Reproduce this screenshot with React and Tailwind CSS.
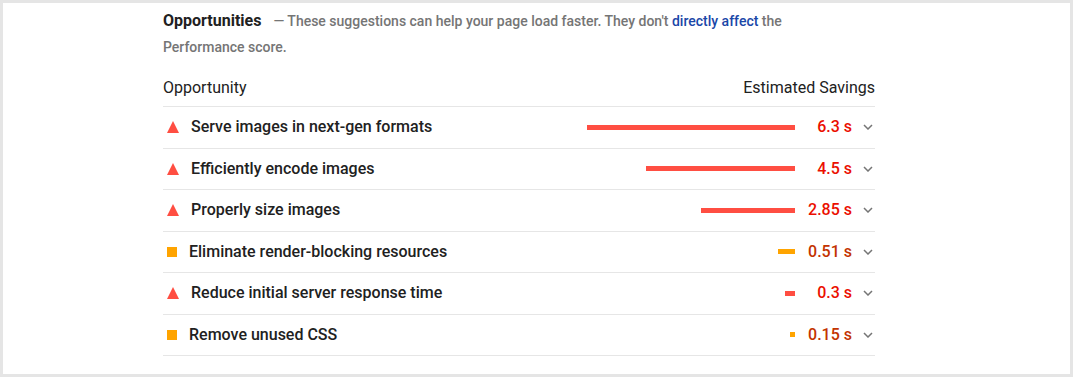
import React from 'react';

const RED = { bar: 'bg-[#ff4e42]', text: 'text-[#eb0f00]' };
const ORANGE = { bar: 'bg-[#ffa400]', text: 'text-[#c33300]' };

const audits = [
    { title: 'Serve images in next-gen formats', savings: 6.3, label: '6.3 s', level: 'fail' },
    { title: 'Efficiently encode images', savings: 4.5, label: '4.5 s', level: 'fail' },
    { title: 'Properly size images', savings: 2.85, label: '2.85 s', level: 'fail' },
    { title: 'Eliminate render-blocking resources', savings: 0.51, label: '0.51 s', level: 'average' },
    { title: 'Reduce initial server response time', savings: 0.3, label: '0.3 s', level: 'fail' },
    { title: 'Remove unused CSS', savings: 0.15, label: '0.15 s', level: 'average' },
];

// Lighthouse-style status icon: red triangle or orange square
const StatusIcon = ({ level }) =>
    level === 'fail' ? (
        <svg width="12" height="12" viewBox="0 0 12 12" className="ml-[4px] mr-[12px] shrink-0">
            <polygon points="6,0 12,12 0,12" fill="#ff4e42" />
        </svg>
    ) : (
        <span className="ml-[4px] mr-[12px] w-[10px] h-[10px] bg-[#ffa400] shrink-0" />
    );

const Chevron = () => (
    <svg width="10" height="6" viewBox="0 0 10 6" className="shrink-0">
        <polyline points="1,1 5,5 9,1" fill="none" stroke="#757575" strokeWidth="1.5" />
    </svg>
);

const AuditRow = ({ audit }) => {
    const c = audit.level === 'fail' ? RED : ORANGE;
    return (
        <div className="flex items-center h-[41.5px] border-b border-[#e6e6e6]">
            <StatusIcon level={audit.level} />
            <span className="text-[16px] text-[#212121] font-medium">{audit.title}</span>
            <div className="flex-1 flex justify-end">
                <div className={`h-[5px] ${c.bar}`} style={{ width: `${Math.round(audit.savings * 33)}px` }} />
            </div>
            <span className={`w-[57px] text-right text-[16px] font-medium ${c.text}`}>{audit.label}</span>
            <span className="w-[23px] flex justify-end pr-[2px]">
                <Chevron />
            </span>
        </div>
    );
};

const App = () => (
    <div className="h-[377px] border-[3px] border-[#e5e5e5] bg-white box-border font-['Roboto',sans-serif]">
        <div className="w-[712px] ml-[160px] pt-[5px]">
            <div className="leading-[26px]">
                <span className="text-[16px] font-bold text-[#212121]">Opportunities</span>
                <span className="ml-[12px] text-[14px] font-medium text-[#757575]">
                    — These suggestions can help your page load faster. They don't{' '}
                    <span className="text-[#1a47a8]">directly affect</span> the
                    <br />
                    Performance score.
                </span>
            </div>
            <div className="flex justify-between items-center h-[38px] mt-[9px] border-b border-[#e6e6e6] text-[16px] text-[#212121]">
                <span>Opportunity</span>
                <span>Estimated Savings</span>
            </div>
            {audits.map(a => (
                <AuditRow key={a.title} audit={a} />
            ))}
        </div>
    </div>
);

export default App;
